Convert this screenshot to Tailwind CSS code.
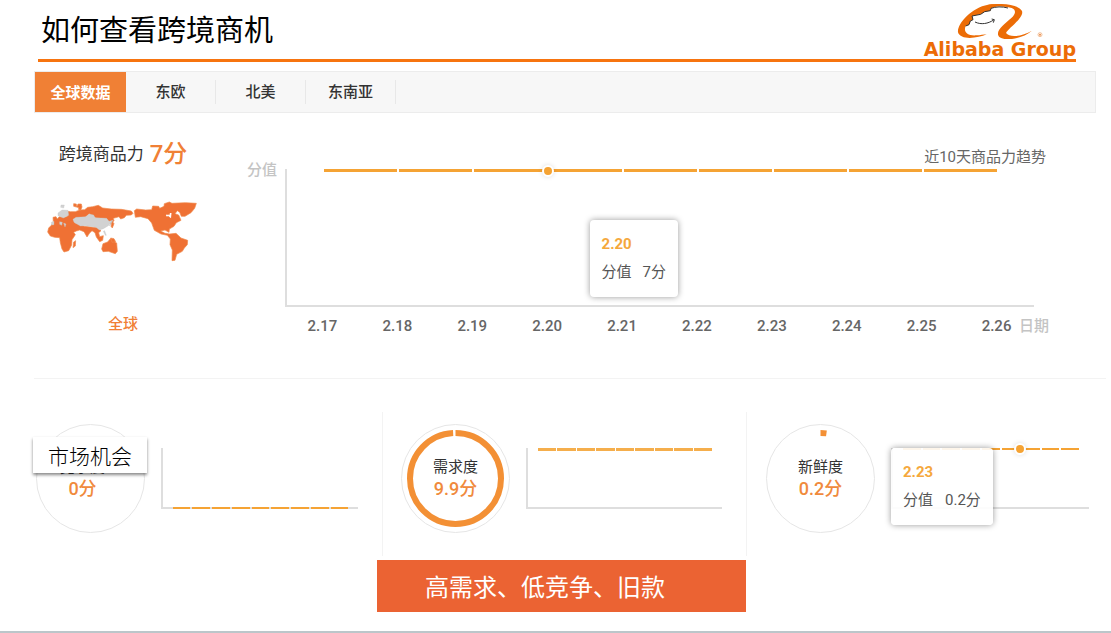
<!DOCTYPE html>
<html lang="zh-CN">
<head>
<meta charset="utf-8">
<meta name="viewport" content="width=device-width, initial-scale=1">
<title>如何查看跨境商机</title>
<script src="https://cdn.jsdelivr.net/npm/@tailwindcss/browser@4"></script>
</head>
<body class="flex min-h-screen flex-col overflow-x-hidden bg-white font-['Roboto','Noto_Sans_CJK_SC',sans-serif] text-[#333]">

<header class="mr-[35px] ml-[38px] flex h-[62px] items-start justify-between border-b-3 border-[#f7740f]">
  <h1 class="pt-2 pl-[3px] font-['Noto_Sans_CJK_SC',sans-serif] text-[29px] leading-10 text-black">如何查看跨境商机</h1>
  <a href="#" class="flex flex-col items-center pt-1 text-[#ec6c06]" aria-label="Alibaba Group">
    <svg class="h-[35px] w-[86px]" viewBox="12 7 258 105" aria-hidden="true">
      <path d="M101 98 C75 110 22 117 15 92 C12 66 55 18 105 9 C125 7 140 8 152 10 C140 14 124 15 114 20 L112 27 L95 30 L83 38 L57 43 L60 54 L52 58 L48 69 L38 73 C30 92 44 103 70 101 C82 101 92 99 101 98 Z" fill="#ec6c06"/>
      <path d="M105 9 C145 4 196 7 207 28 C214 48 166 79 159 94 C170 109 208 104 237 87 C210 110 160 120 140 107 C122 91 155 66 175 49 C190 35 189 24 176 19 C160 13 135 15 105 9 Z" fill="#ec6c06"/>
      <path d="M165 19 C148 14 127 15 114 20 L112 27 L95 30 L83 38 L57 43 L60 54 L52 58 L48 69 L38 73 M66 61 C85 70 105 66 122 55 M116 52 L124 54 L121 63" fill="none" stroke="#333" stroke-width="3"/>
      <circle cx="261" cy="99" r="6" fill="none" stroke="#eca56c" stroke-width="2"/><circle cx="261" cy="99" r="3" fill="#ec8c46"/>
    </svg>
    <span class="font-['DejaVu_Sans',sans-serif] text-[19px] leading-5 font-bold">Alibaba Group</span>
  </a>
</header>

<nav class="mt-[9px] mr-[15px] ml-[34px] flex h-[42px] items-stretch border border-[#ececec] bg-[#f7f7f7] text-[15px] font-medium">
  <button class="w-[91px] bg-[#f08035] pt-0.5 font-bold text-white">全球数据</button>
  <button class="my-2 w-[90px] border-r border-[#e8e8e8]">东欧</button>
  <button class="my-2 w-[90px] border-r border-[#e8e8e8]">北美</button>
  <button class="my-2 w-[90px] border-r border-[#e8e8e8]">东南亚</button>
</nav>

<main>
  <section class="mr-[5px] ml-[34px] flex border-b border-[#f3f3f3] pb-10">
    <div class="flex w-[178px] shrink-0 flex-col items-center pt-[25px]">
      <h2 class="flex items-center gap-1.5 text-[17px] leading-8">跨境商品力 <strong class="text-2xl leading-8 font-medium text-[#f08035]">7分</strong></h2>
      <svg class="mt-[30px] h-[64px] w-[154px]" viewBox="20 30 462 192" role="img" aria-label="世界地图">
        <g fill="#ef7134" stroke="#f08a4c" stroke-width="2" stroke-linejoin="round">
          <path d="M36 106 L42 96 L41 82 L50 80 L54 87 L60 80 L76 82 L84 79 L84 64 L94 65 L108 65 L121 60 L136 59 L145 52 L160 50 L177 46 L190 54 L216 57 L246 58 L276 63 L281 70 L276 75 L261 76 L255 83 L244 87 L239 80 L222 85 L224 92 L215 102 L207 95 L195 87 L170 84 L150 71 L137 82 L102 88 L107 99 L135 109 L175 113 L185 122 L178 128 L181 140 L192 137 L190 151 L181 155 L171 141 L167 128 L158 122 L151 129 L143 141 L134 125 L121 120 L111 123 L103 127 L108 134 L98 149 L97 165 L88 182 L74 186 L68 177 L63 158 L61 143 L46 142 L33 138 L25 126 L28 114 Z"/>
          <path d="M285 62 L292 57 L319 60 L337 59 L340 48 L358 49 L361 55 L374 49 L375 41 L390 36 L398 40 L438 38 L471 40 L466 55 L455 68 L437 79 L426 79 L421 67 L414 62 L407 71 L418 75 L425 91 L411 98 L404 109 L390 117 L389 127 L377 120 L364 123 L377 130 L391 132 L410 130 L425 144 L445 151 L444 164 L435 174 L429 184 L412 193 L407 211 L398 212 L399 180 L392 164 L393 147 L384 136 L365 132 L345 121 L337 99 L326 86 L304 80 L288 82 Z"/>
          <path d="M191 161 L205 156 L213 146 L220 152 L232 159 L234 184 L228 191 L207 184 L191 185 L187 177 Z"/>
          <path d="M103 41 L111 42 L112 51 L116 42 L126 42 L128 51 L124 61 L117 58 L119 53 L103 49 Z M103 156 L109 152 L108 168 L101 173 Z M214 144 L224 146 L229 155 L218 157 Z M219 94 L224 101 L219 114 L215 109 Z"/>
        </g>
        <g fill="#d2d2d2" stroke="#c4c4c4" stroke-width="1">
          <path d="M101 88 L110 82 L140 80 L149 72 L163 75 L167 83 L202 85 L209 94 L221 91 L207 107 L192 116 L180 120 L170 112 L139 107 L123 108 L104 97 Z M65 45 L75 45 L73 54 L64 52 Z M56 69 L68 60 L86 61 L88 76 L72 84 L56 77 Z M61 95 L69 97 L67 106 L61 103 Z M73 99 L80 102 L77 111 Z M36 97 L44 94 L44 104 L37 105 Z M196 122 L201 136 L198 136 L192 124 Z"/>
          <path d="M211 108 L218 92" stroke-width="3"/>
        </g>
        <path d="M387 75 L393 80 L394 69 M381 75 L385 78" fill="none" stroke="#fff" stroke-width="5"/>
      </svg>
      <p class="mt-12 text-[15px] leading-6 font-medium text-[#f08035]">全球</p>
    </div>

    <div class="mr-[72px] ml-[35px] flex grow gap-2 pt-8">
      <span class="mt-[13px] text-[15px] leading-6 font-medium text-[#c4c4c4]">分值</span>
      <div class="relative grow">
        <h2 class="-mr-3 text-right text-[15px] leading-6 text-[#666]">近10天商品力趋势</h2>
        <div class="relative h-[138px] border-b-2 border-l-2 border-[#dedede]">
          <div class="flex gap-0.5 px-[5%]">
            <i class="h-[3px] grow bg-[#f5a334]"></i><i class="h-[3px] grow bg-[#f5a334]"></i><i class="h-[3px] grow bg-[#f5a334]"></i><i class="h-[3px] grow bg-[#f5a334]"></i><i class="h-[3px] grow bg-[#f5a334]"></i><i class="h-[3px] grow bg-[#f5a334]"></i><i class="h-[3px] grow bg-[#f5a334]"></i><i class="h-[3px] grow bg-[#f5a334]"></i><i class="h-[3px] grow bg-[#f5a334]"></i>
          </div>
          <i class="absolute -top-1 left-[35%] size-3 -translate-x-1/2 rounded-full border-2 border-white bg-[#f5a334] shadow-[0_0_5px_#0002]"></i>
          <div role="tooltip" class="absolute top-[51px] left-[40.5%] rounded-sm bg-white px-3 py-2.5 text-[15px] whitespace-nowrap shadow-[0_0_6px_#0006]">
            <p class="leading-7 font-bold text-[#f5a83c]">2.20</p>
            <p class="flex gap-[11px] leading-[29px] text-[#555]"><span>分值</span><span>7分</span></p>
          </div>
        </div>
        <div class="relative mt-[7px] grid grid-cols-10 text-center text-[15px] leading-6 font-medium text-[#666]">
          <span>2.17</span><span>2.18</span><span>2.19</span><span>2.20</span><span>2.21</span><span>2.22</span><span>2.23</span><span>2.24</span><span>2.25</span><span>2.26</span>
          <span class="absolute -right-[15px] text-[#c4c4c4]">日期</span>
        </div>
      </div>
    </div>
  </section>

  <div class="mt-[33px] ml-[19px] grid grid-cols-3">
    <section class="flex h-[144px] gap-4 border-r border-[#f3f3f3] pt-3 pr-6 pl-[17px]">
      <div class="relative flex size-[109px] shrink-0 flex-col items-center rounded-full border border-[#e6e6e6] pt-[31px]">
        <h3 class="pr-4 text-[15px] leading-[22px] font-medium">竞争度</h3>
        <p class="pr-4 text-lg leading-[22px] font-medium text-[#f08a3c]">0分</p>
        <div class="absolute top-3 -left-1 bg-white px-[15px] font-['Noto_Sans_CJK_SC',sans-serif] text-[21px] leading-9 font-light whitespace-nowrap text-black shadow-[0_2px_3px_#0007]">市场机会</div>
      </div>
      <div class="mt-6 flex h-[61px] grow flex-col justify-end border-l-2 border-[#dedede]">
        <div class="flex gap-0.5 bg-[#dedede] px-[5%]">
          <i class="h-0.5 grow bg-[#f5a334]"></i><i class="h-0.5 grow bg-[#f5a334]"></i><i class="h-0.5 grow bg-[#f5a334]"></i><i class="h-0.5 grow bg-[#f5a334]"></i><i class="h-0.5 grow bg-[#f5a334]"></i><i class="h-0.5 grow bg-[#f5a334]"></i><i class="h-0.5 grow bg-[#f5a334]"></i><i class="h-0.5 grow bg-[#f5a334]"></i><i class="h-0.5 grow bg-[#f5a334]"></i>
        </div>
      </div>
    </section>

    <section class="flex h-[144px] gap-4 border-r border-[#f3f3f3] pt-3 pr-6 pl-[18px]">
      <div class="relative flex size-[109px] shrink-0 flex-col items-center rounded-full border border-[#e6e6e6] pt-[31px]">
        <svg class="absolute inset-0 size-full" viewBox="0 0 107 107" aria-hidden="true"><circle cx="53.5" cy="53.5" r="45.5" fill="none" stroke="#f39035" stroke-width="6" stroke-dasharray="283 3" transform="rotate(-90 53.5 53.5)"/></svg>
        <h3 class="text-[15px] leading-[22px]">需求度</h3>
        <p class="text-lg leading-[22px] font-medium text-[#f08a3c]">9.9分</p>
      </div>
      <div class="mt-6 h-[61px] grow border-b-2 border-l-2 border-[#dedede]">
        <div class="flex gap-px px-[5%]">
          <i class="h-[3px] grow bg-[#f5ae4c]"></i><i class="h-[3px] grow bg-[#f5ae4c]"></i><i class="h-[3px] grow bg-[#f5ae4c]"></i><i class="h-[3px] grow bg-[#f5ae4c]"></i><i class="h-[3px] grow bg-[#f5ae4c]"></i><i class="h-[3px] grow bg-[#f5ae4c]"></i><i class="h-[3px] grow bg-[#f5ae4c]"></i><i class="h-[3px] grow bg-[#f5ae4c]"></i><i class="h-[3px] grow bg-[#f5ae4c]"></i>
        </div>
      </div>
    </section>

    <section class="flex h-[144px] gap-4 pt-3 pr-[22px] pl-[19px]">
      <div class="relative flex size-[109px] shrink-0 flex-col items-center rounded-full border border-[#e6e6e6] pt-[31px]">
        <svg class="absolute inset-0 size-full" viewBox="0 0 107 107" aria-hidden="true"><circle cx="53.5" cy="53.5" r="45.5" fill="none" stroke="#f39035" stroke-width="6" stroke-dasharray="6 280" transform="rotate(-90 53.5 53.5)"/></svg>
        <h3 class="text-[15px] leading-[22px]">新鲜度</h3>
        <p class="text-lg leading-[22px] font-medium text-[#f08a3c]">0.2分</p>
      </div>
      <div class="relative mt-6 h-[61px] grow border-b-2 border-l-2 border-[#dedede]">
        <div class="flex gap-0.5 px-[5%]">
          <i class="h-0.5 grow bg-[#f5a334]"></i><i class="h-0.5 grow bg-[#f5a334]"></i><i class="h-0.5 grow bg-[#f5a334]"></i><i class="h-0.5 grow bg-[#f5a334]"></i><i class="h-0.5 grow bg-[#f5a334]"></i><i class="h-0.5 grow bg-[#f5a334]"></i><i class="h-0.5 grow bg-[#f5a334]"></i><i class="h-0.5 grow bg-[#f5a334]"></i><i class="h-0.5 grow bg-[#f5a334]"></i>
        </div>
        <i class="absolute -top-[5px] left-[65%] size-3 -translate-x-1/2 rounded-full border-2 border-white bg-[#f5a334] shadow-[0_0_5px_#0002]"></i>
        <div role="tooltip" class="absolute top-0 -left-0.5 rounded-sm bg-white/90 px-3 py-2.5 text-[15px] whitespace-nowrap shadow-[0_0_6px_#0006]">
          <p class="leading-7 font-bold text-[#f5a83c]">2.23</p>
          <p class="flex gap-3 leading-[29px] text-[#555]"><span>分值</span><span>0.2分</span></p>
        </div>
      </div>
    </section>
  </div>
</main>

<div class="mt-1 flex justify-center pl-3">
  <p class="w-[369px] bg-[#eb6333] pl-12 font-['Noto_Sans_CJK_SC',sans-serif] text-2xl leading-[52px] text-white">高需求、低竞争、旧款</p>
</div>
<footer class="mt-auto h-0.5 bg-[#bcc6ca]"></footer>
</body>
</html>
